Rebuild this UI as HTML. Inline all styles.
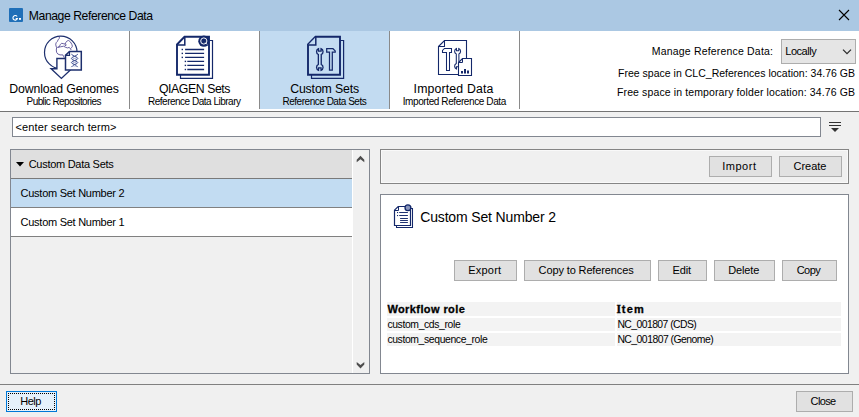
<!DOCTYPE html>
<html><head><meta charset="utf-8"><style>
html,body{margin:0;padding:0;}
body{width:859px;height:417px;overflow:hidden;position:relative;background:#f0f0f0;font-family:"Liberation Sans",sans-serif;}
.a{position:absolute;}
.t{white-space:pre;}
</style></head><body>
<div class="a" style="left:0px;top:0px;width:859px;height:31px;background:#abc8e3;"></div>
<div class="a" style="left:9px;top:8px;width:14px;height:14px;background:#1f6fb8;border-radius:1px"></div>
<svg class="a" style="left:838px;top:9px" width="12" height="12"><path d="M1 1L11 11M11 1L1 11" stroke="#000" stroke-width="1.1"/></svg>
<div class="a" style="left:0px;top:31px;width:859px;height:80px;background:#ffffff;"></div>
<div class="a" style="left:260px;top:31px;width:129px;height:78px;background:#c2dbf1;"></div>
<div class="a" style="left:129px;top:31px;width:1px;height:78px;background:#8a8a8a;"></div>
<div class="a" style="left:259px;top:31px;width:1px;height:78px;background:#8a8a8a;"></div>
<div class="a" style="left:389px;top:31px;width:1px;height:78px;background:#8a8a8a;"></div>
<div class="a" style="left:519px;top:31px;width:1px;height:78px;background:#8a8a8a;"></div>
<div class="a" style="left:0px;top:111px;width:859px;height:1px;background:#747474;"></div>
<div class="a" style="left:781px;top:39px;width:75px;height:25px;background:#e5e5e5;box-shadow:inset 0 0 0 1px #adadad;"></div>
<svg class="a" style="left:842px;top:48px" width="10" height="8"><path d="M1 1.6L5 5.6L9 1.6" stroke="#2a2a2a" stroke-width="1.25" fill="none"/></svg>
<div class="a" style="left:12px;top:117px;width:809px;height:20px;background:#fff;box-shadow:inset 0 0 0 1px #828790;"></div>
<div class="a" style="left:829px;top:122px;width:12px;height:1px;background:#333;"></div>
<div class="a" style="left:829px;top:125px;width:12px;height:1px;background:#333;"></div>
<svg class="a" style="left:831px;top:128px" width="9" height="5"><path d="M0 0H8L4 4Z" fill="#333"/></svg>
<div class="a" style="left:10px;top:149px;width:360px;height:225px;background:#f0f0f0;box-shadow:inset 0 0 0 1px #828790;"></div>
<div class="a" style="left:11px;top:150px;width:341px;height:28px;background:#dfdfdf;"></div>
<div class="a" style="left:11px;top:178px;width:341px;height:1px;background:#7a7a7a;"></div>
<div class="a" style="left:11px;top:179px;width:341px;height:28px;background:#c2dcf2;"></div>
<div class="a" style="left:11px;top:207px;width:341px;height:1px;background:#808080;"></div>
<div class="a" style="left:11px;top:208px;width:341px;height:28px;background:#ffffff;"></div>
<div class="a" style="left:11px;top:236px;width:341px;height:1px;background:#808080;"></div>
<div class="a" style="left:352px;top:150px;width:1px;height:223px;background:#ffffff;"></div>
<svg class="a" style="left:0px;top:0px" width="859" height="417"><path d="M356.7 159.8 L360.5 155.8 L364.3 159.8 V162.2 L360.5 159.2 L356.7 162.2 Z" fill="#4d4d4d"/><path d="M356.7 364.4 L360.5 368.4 L364.3 364.4 V362 L360.5 365 L356.7 362 Z" fill="#4d4d4d"/></svg>

<svg class="a" style="left:16px;top:162px" width="8" height="5"><path d="M0 0H8L4 4.5Z" fill="#000"/></svg>
<div class="a" style="left:380px;top:149px;width:469px;height:35px;box-shadow:inset 0 0 0 1px #858585;"></div>
<div class="a" style="left:381px;top:150px;width:467px;height:33px;box-shadow:inset 0 0 0 1px #f9f9f9;"></div>
<div class="a" style="left:709px;top:156px;width:63px;height:21px;background:#e1e1e1;box-shadow:inset 0 0 0 1px #adadad;"></div>
<div class="a" style="left:779px;top:156px;width:63px;height:21px;background:#e1e1e1;box-shadow:inset 0 0 0 1px #adadad;"></div>
<div class="a" style="left:380px;top:194px;width:469px;height:180px;background:#ffffff;box-shadow:inset 0 0 0 1px #828790;"></div>
<div class="a" style="left:454px;top:260px;width:63px;height:21px;background:#e1e1e1;box-shadow:inset 0 0 0 1px #adadad;"></div>
<div class="a" style="left:524px;top:260px;width:127px;height:21px;background:#e1e1e1;box-shadow:inset 0 0 0 1px #adadad;"></div>
<div class="a" style="left:658px;top:260px;width:49px;height:21px;background:#e1e1e1;box-shadow:inset 0 0 0 1px #adadad;"></div>
<div class="a" style="left:714px;top:260px;width:61px;height:21px;background:#e1e1e1;box-shadow:inset 0 0 0 1px #adadad;"></div>
<div class="a" style="left:782px;top:260px;width:55px;height:21px;background:#e1e1e1;box-shadow:inset 0 0 0 1px #adadad;"></div>
<div class="a" style="left:387px;top:302px;width:228px;height:14px;background:#f3f3f3;"></div>
<div class="a" style="left:617px;top:302px;width:224px;height:14px;background:#f3f3f3;"></div>
<div class="a" style="left:387px;top:318px;width:228px;height:13px;background:#f3f3f3;"></div>
<div class="a" style="left:617px;top:318px;width:224px;height:13px;background:#f3f3f3;"></div>
<div class="a" style="left:387px;top:333px;width:228px;height:13px;background:#f3f3f3;"></div>
<div class="a" style="left:617px;top:333px;width:224px;height:13px;background:#f3f3f3;"></div>
<div class="a t" style="left:616.6px;top:302px;font-size:11px;line-height:14px;font-weight:bold;color:#000;-webkit-text-stroke:0.3px #000"><span style="font-family:Liberation Serif;font-size:11.6px;letter-spacing:0.6px">I</span><span style="letter-spacing:1.3px">tem</span></div>
<div class="a" style="left:0px;top:384px;width:859px;height:1px;background:#808080;"></div>
<div class="a" style="left:6px;top:391px;width:51px;height:21px;background:#e5f1fb;box-shadow:inset 0 0 0 1px #0078d7;"></div>
<div class="a" style="left:8px;top:393px;width:47px;height:17px;border:1px dotted #000;box-sizing:border-box"></div>
<div class="a" style="left:796px;top:391px;width:57px;height:21px;background:#e1e1e1;box-shadow:inset 0 0 0 1px #adadad;"></div>
<svg class="a" style="left:0;top:0" width="859" height="417" viewBox="0 0 859 417">
<!-- title icon G -->
<path d="M17.1 16.5 A2.3 2.3 0 1 0 17.4 18.6 H15.7" stroke="#fff" stroke-width="1.1" fill="none"/>
<rect x="19" y="18" width="2" height="1.8" fill="#fff"/>

<!-- Download Genomes icon -->
<g stroke="#1d2f6d" fill="none">
 <circle cx="60.8" cy="52.4" r="16.3" stroke-width="1.2"/>
 <path d="M59.5 36.2 L59.2 38.5 L58 39.9 L57.5 41.3 L56.3 42.5 L55.7 44.2 L56 45.9 L56.6 47.7 L56.3 50 L56.6 52.3 L57.8 54 L60 54.9 L62.9 54.9 L63.5 56.3 L64.1 57.7" stroke="#4f4490" stroke-width="0.85"/>
 <path d="M57.5 47.4 L59.5 46.5 L60.1 44.8 L61.5 43.3 L63.2 43.6 L64.7 44.2 L65.8 42.5 L67.3 40.8 L68.7 40.5 L70.4 41.9 L71.9 44.5 L72.4 46.2 L71.6 47.7 L70.4 48.8 L71.3 50 M57.5 47.4 L60.6 46.8 L63.5 46.2 L65.8 47.4 L67.5 47.9 L69.3 47.4 L70.4 48.8 M65.2 43.3 L66.2 45.2 L64.6 45.9" stroke="#4f4490" stroke-width="0.85"/>
 <path d="M56.9 58.5 H66 V68.7 H71.7 L61.4 78.4 L51.1 68.7 H56.9 Z" fill="#fff" stroke-width="1.4" stroke-linejoin="miter"/>
 <path d="M65.5 55.4 L69.5 51.4 H81.3 V70.1 H65.5 Z" fill="#fff" stroke-width="1.5"/>
 <path d="M65.5 55.4 H69.5 V51.4" stroke-width="1.2"/>
 <path d="M71.4 54.2 Q73 55.6 74.6 56.3 Q81 58.45 74.6 60.6 Q68.2 62.55 74.6 64.5 Q76.4 65.4 77.6 67.1 M77.8 54.2 Q76.2 55.6 74.6 56.3 Q68.2 58.45 74.6 60.6 Q81 62.55 74.6 64.5 Q72.8 65.4 71.4 67.1" stroke="#34468a" stroke-width="1"/>
 <path d="M72.6 58.45 H76.6 M72.6 62.55 H76.6 M73.2 66 H76" stroke="#a0aad0" stroke-width="0.8"/>
</g>

<!-- QIAGEN Sets icon -->
<g stroke="#14286a" fill="none">
 <path d="M180.5 75 V78.4 H212.5 V40.5 H209.5" stroke-width="1.2"/>
 <path d="M177 44.5 L184.5 36.8 H209 V74.7 H177 Z" fill="#fff" stroke-width="1.9"/>
 <path d="M177 45.1 H184.8 V37" stroke-width="1.5"/>
 <circle cx="203.9" cy="41.2" r="5.6" fill="#14286a" stroke="none"/>
 <circle cx="203.8" cy="41" r="3.1" stroke="#fff" stroke-width="0.95"/>
 <path d="M205.3 42.6 L207 44.4" stroke="#fff" stroke-width="1"/>
 <g stroke-width="1.3">
  <path d="M185.1 49.5 H204.1 M185.1 53.4 H204.1 M185.1 57.4 H204.1 M187.3 61.4 H204.1 M187.3 65.4 H204.1 M187.3 69.5 H204.1"/>
 </g>
 <g fill="#14286a" stroke="none">
  <rect x="181.6" y="48.8" width="1.4" height="1.4"/><rect x="181.6" y="52.7" width="1.4" height="1.4"/><rect x="181.6" y="56.7" width="1.4" height="1.4"/>
  <rect x="184.7" y="60.7" width="1.4" height="1.4"/><rect x="184.7" y="64.7" width="1.4" height="1.4"/><rect x="184.7" y="68.8" width="1.4" height="1.4"/>
 </g>
</g>

<!-- Custom Sets icon -->
<g stroke="#14286a" fill="none">
 <path d="M311.5 75 V78.4 H343.6 V40.5 H340.5" stroke-width="1.2"/>
 <path d="M308 44.5 L315.5 36.8 H340 V74.7 H308 Z" fill="#c4dcf2" stroke-width="1.9"/>
 <path d="M308 45.1 H315.8 V37" fill="#c4dcf2" stroke-width="1.5"/>
 <!-- wrench -->
 <path d="M318.55 48.60 V51.10 H321.05 V48.60 A3.25 3.25 0 0 1 321.25 54.51 V64.39 A3.25 3.25 0 0 1 321.05 70.30 V67.80 H318.55 V70.30 A3.25 3.25 0 0 1 318.35 64.39 V54.51 A3.25 3.25 0 0 1 318.55 48.60 Z" stroke-width="1.3"/>
 <!-- hammer -->
 <path d="M326.7 48.7 H333 L335.2 50.9 V52.2 H332.3 V70.2 H329.5 V52.2 H326.7 Z" stroke-width="1.25"/>
</g>

<!-- Imported Data icon -->
<g stroke="#14286a" fill="none">
 <path d="M438.5 46.5 L444.5 40.5 H466.5 V74.5 H438.5 Z" fill="#fff" stroke-width="1.1"/>
 <path d="M438.5 46.5 H444.5 V40.5" stroke-width="1.05"/>
 <path d="M444.5 48.5 H451.5 V52.5 H449.5 V70.5 H446.5 V52.5 H442.5 V50.5 Z" stroke-width="1.05"/>
 <path d="M456.45 48.53 V50.83 H458.75 V48.53 A3.0 3.0 0 0 1 458.90 54.00 V63.50 A3.0 3.0 0 0 1 458.75 68.97 V66.67 H456.45 V68.97 A3.0 3.0 0 0 1 456.30 63.50 V54.00 A3.0 3.0 0 0 1 456.45 48.53 Z" stroke-width="1.05"/>
 <path d="M458.5 62.5 L462.5 58.5 H471.5 V75.5 H458.5 Z" fill="#fff" stroke-width="1.1"/>
 <path d="M458.5 62.5 H462.5 V58.5" stroke-width="1"/>
 <g fill="#14286a" stroke="none">
  <rect x="461" y="71" width="2" height="2.5"/><rect x="464" y="69" width="2" height="4.5"/><rect x="467" y="70.5" width="2" height="3"/>
 </g>
</g>

<!-- detail icon -->
<g stroke="#14286a" fill="none">
 <path d="M396.5 225.5 V227.5 H412.5 V208.5 H410.8" stroke-width="1.05"/>
 <path d="M394.5 210.2 L398.2 206.5 H410.5 V225.5 H394.5 Z" fill="#fff" stroke-width="1.2"/>
 <path d="M394.5 210.5 H398.5 V206.5" stroke-width="1"/>
 <circle cx="407.9" cy="207.7" r="2.9" fill="#8a96bc" stroke="#14286a" stroke-width="1.3"/>
 <path d="M399.2 212.5 H407.9 M399.2 215.5 H407.9 M400.1 218.5 H407.9 M400.1 220.5 H407.9 M400.1 222.5 H407.9" stroke-width="0.95"/>
 <rect x="397" y="212" width="1.1" height="1.1" fill="#14286a" stroke="none"/>
 <rect x="397" y="215" width="1.1" height="1.1" fill="#14286a" stroke="none"/>
</g>
</svg>

<div class="a t" style="left:28.80px;top:9.17px;font-size:12.2px;line-height:15px;letter-spacing:-0.426px;color:#000;-webkit-text-stroke:0px #000;">Manage Reference Data</div>
<div class="a t" style="left:9.20px;top:81.64px;font-size:12.3px;line-height:15px;letter-spacing:-0.111px;color:#000;-webkit-text-stroke:0px #000;">Download Genomes</div>
<div class="a t" style="left:26.60px;top:95.53px;font-size:10.0px;line-height:12px;letter-spacing:-0.600px;color:#000;-webkit-text-stroke:0px #000;">Public Repositories</div>
<div class="a t" style="left:159.00px;top:81.64px;font-size:12.3px;line-height:15px;letter-spacing:-0.440px;color:#000;-webkit-text-stroke:0px #000;">QIAGEN Sets</div>
<div class="a t" style="left:148.00px;top:95.53px;font-size:10.0px;line-height:12px;letter-spacing:-0.494px;color:#000;-webkit-text-stroke:0px #000;">Reference Data Library</div>
<div class="a t" style="left:290.20px;top:81.64px;font-size:12.3px;line-height:15px;letter-spacing:-0.144px;color:#000;-webkit-text-stroke:0px #000;">Custom Sets</div>
<div class="a t" style="left:282.50px;top:95.53px;font-size:10.0px;line-height:12px;letter-spacing:-0.479px;color:#000;-webkit-text-stroke:0px #000;">Reference Data Sets</div>
<div class="a t" style="left:413.60px;top:81.64px;font-size:12.3px;line-height:15px;letter-spacing:0.152px;color:#000;-webkit-text-stroke:0px #000;">Imported Data</div>
<div class="a t" style="left:402.70px;top:95.53px;font-size:10.0px;line-height:12px;letter-spacing:-0.396px;color:#000;-webkit-text-stroke:0px #000;">Imported Reference Data</div>
<div class="a t" style="left:651.80px;top:44.66px;font-size:10.5px;line-height:13px;letter-spacing:0.181px;color:#000;-webkit-text-stroke:0px #000;">Manage Reference Data:</div>
<div class="a t" style="left:785.30px;top:43.99px;font-size:11px;line-height:14px;letter-spacing:-0.473px;color:#000;-webkit-text-stroke:0px #000;">Locally</div>
<div class="a t" style="left:618.00px;top:66.66px;font-size:10.5px;line-height:13px;letter-spacing:0.014px;color:#000;-webkit-text-stroke:0px #000;">Free space in CLC_References location: 34.76 GB</div>
<div class="a t" style="left:617.00px;top:86.06px;font-size:10.5px;line-height:13px;letter-spacing:0.119px;color:#000;-webkit-text-stroke:0px #000;">Free space in temporary folder location: 34.76 GB</div>
<div class="a t" style="left:15.60px;top:119.79px;font-size:11px;line-height:14px;letter-spacing:0.104px;color:#000;-webkit-text-stroke:0px #000;">&lt;enter search term&gt;</div>
<div class="a t" style="left:28.70px;top:157.49px;font-size:11px;line-height:14px;letter-spacing:-0.277px;color:#000;-webkit-text-stroke:0px #000;">Custom Data Sets</div>
<div class="a t" style="left:20.60px;top:186.49px;font-size:11px;line-height:14px;letter-spacing:-0.267px;color:#000;-webkit-text-stroke:0px #000;">Custom Set Number 2</div>
<div class="a t" style="left:20.60px;top:215.49px;font-size:11px;line-height:14px;letter-spacing:-0.267px;color:#000;-webkit-text-stroke:0px #000;">Custom Set Number 1</div>
<div class="a t" style="left:722.30px;top:159.19px;font-size:11px;line-height:14px;letter-spacing:0.496px;color:#000;-webkit-text-stroke:0px #000;">Import</div>
<div class="a t" style="left:793.60px;top:159.19px;font-size:11px;line-height:14px;letter-spacing:-0.040px;color:#000;-webkit-text-stroke:0px #000;">Create</div>
<div class="a t" style="left:420.20px;top:208.15px;font-size:14px;line-height:18px;letter-spacing:-0.151px;color:#000;-webkit-text-stroke:0px #000;">Custom Set Number 2</div>
<div class="a t" style="left:468.30px;top:262.69px;font-size:11px;line-height:14px;letter-spacing:0.193px;color:#000;-webkit-text-stroke:0px #000;">Export</div>
<div class="a t" style="left:538.60px;top:262.69px;font-size:11px;line-height:14px;letter-spacing:-0.125px;color:#000;-webkit-text-stroke:0px #000;">Copy to References</div>
<div class="a t" style="left:672.40px;top:262.69px;font-size:11px;line-height:14px;letter-spacing:-0.099px;color:#000;-webkit-text-stroke:0px #000;">Edit</div>
<div class="a t" style="left:728.30px;top:262.69px;font-size:11px;line-height:14px;letter-spacing:-0.156px;color:#000;-webkit-text-stroke:0px #000;">Delete</div>
<div class="a t" style="left:796.70px;top:262.69px;font-size:11px;line-height:14px;letter-spacing:-0.560px;color:#000;-webkit-text-stroke:0px #000;">Copy</div>
<div class="a t" style="left:387.40px;top:301.99px;font-size:11px;line-height:14px;letter-spacing:0.408px;color:#000;font-weight:bold;-webkit-text-stroke:0.3px #000;">Workflow role</div>
<div class="a t" style="left:387.40px;top:318.20px;font-size:10.4px;line-height:13px;letter-spacing:-0.376px;color:#000;-webkit-text-stroke:0px #000;">custom_cds_role</div>
<div class="a t" style="left:387.40px;top:333.20px;font-size:10.4px;line-height:13px;letter-spacing:-0.377px;color:#000;-webkit-text-stroke:0px #000;">custom_sequence_role</div>
<div class="a t" style="left:617.40px;top:318.20px;font-size:10.4px;line-height:13px;letter-spacing:-0.560px;color:#000;-webkit-text-stroke:0px #000;">NC_001807 (CDS)</div>
<div class="a t" style="left:617.40px;top:333.20px;font-size:10.4px;line-height:13px;letter-spacing:-0.521px;color:#000;-webkit-text-stroke:0px #000;">NC_001807 (Genome)</div>
<div class="a t" style="left:20.20px;top:393.99px;font-size:11px;line-height:14px;letter-spacing:-0.468px;color:#000;-webkit-text-stroke:0px #000;">Help</div>
<div class="a t" style="left:810.60px;top:393.99px;font-size:11px;line-height:14px;letter-spacing:-0.651px;color:#000;-webkit-text-stroke:0px #000;">Close</div>
</body></html>
